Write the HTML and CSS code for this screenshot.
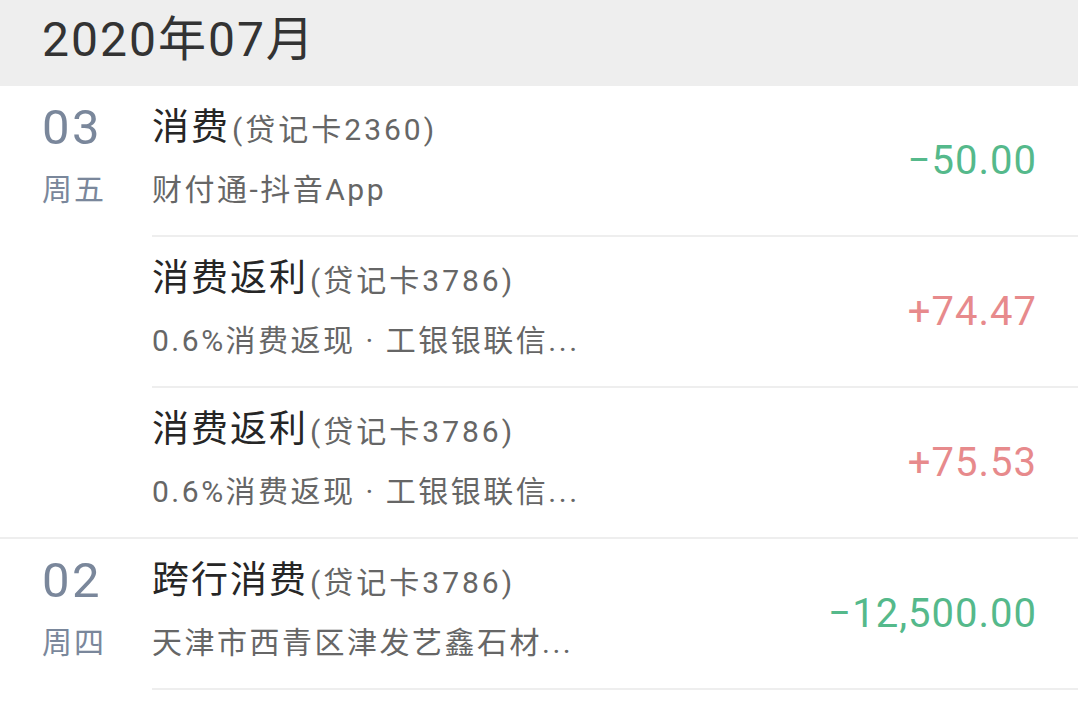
FILE: index.html
```html
<!DOCTYPE html>
<html lang="zh-CN">
<head>
  <meta charset="UTF-8" />
  <meta name="viewport" content="width=device-width, initial-scale=1.0"/>
  <title>账单明细</title>
  <link rel="stylesheet" href="styles.css">
</head>
<body>

  <div class="month">2020年07月</div>

  <div class="day">
    <div class="date">
      <div class="dayNum">03</div>
      <div class="week">周五</div>
    </div>
    <div class="items">
      <div class="item">
        <div class="info">
          <div class="title">消费<span class="card">(贷记卡2360)</span></div>
          <div class="desc">财付通-抖音App</div>
        </div>
        <div class="amount out">−50.00</div>
      </div>
      <div class="item">
        <div class="info">
          <div class="title">消费返利<span class="card">(贷记卡3786)</span></div>
          <div class="desc">0.6%消费返现 · 工银银联信...</div>
        </div>
        <div class="amount in">+74.47</div>
      </div>
      <div class="item">
        <div class="info">
          <div class="title">消费返利<span class="card">(贷记卡3786)</span></div>
          <div class="desc">0.6%消费返现 · 工银银联信...</div>
        </div>
        <div class="amount in">+75.53</div>
      </div>
    </div>
  </div>

  <div class="day">
    <div class="date">
      <div class="dayNum">02</div>
      <div class="week">周四</div>
    </div>
    <div class="items">
      <div class="item">
        <div class="info">
          <div class="title">跨行消费<span class="card">(贷记卡3786)</span></div>
          <div class="desc">天津市西青区津发艺鑫石材...</div>
        </div>
        <div class="amount out">−12,500.00</div>
      </div>
      <div class="item">
        <div class="info">
          <div class="title">跨行消费<span class="card">(贷记卡3786)</span></div>
          <div class="desc">天津市西青区津发艺鑫石材...</div>
        </div>
        <div class="amount out">−3,000.00</div>
      </div>
    </div>
  </div>

</body>
</html>
```

FILE: styles.css
```css
body {
  margin: 0;
  padding: 0;
  font-family: Roboto, 'Noto Sans CJK SC', sans-serif;
  background: #ffffff;
  color: #333333;
  overflow: hidden;
}

.month {
  height: 86px;
  line-height: 80px;
  padding-left: 42px;
  background-color: #eeeeee;
  font-size: 48px;
  letter-spacing: 2px;
  color: #333333;
}

.day {
  display: flex;
  border-bottom: 2px solid #eeeeee;
}

.day:last-child {
  border-bottom: none;
}

.date {
  width: 152px;
  padding: 18px 0 0 42px;
  box-sizing: border-box;
  flex-shrink: 0;
  color: #7a879b;
}

.dayNum {
  height: 48px;
  line-height: 48px;
  font-size: 49px;
  letter-spacing: 2.5px;
}

.week {
  margin-top: 18px;
  height: 40px;
  line-height: 40px;
  font-size: 30px;
  letter-spacing: 2px;
}

.items {
  flex: 1;
}

.item {
  display: flex;
  align-items: center;
  justify-content: space-between;
  padding: 18px 41px 25px 0;
  border-bottom: 2px solid #eeeeee;
}

.item:last-child {
  border-bottom: none;
}

.title {
  height: 48px;
  line-height: 48px;
  font-size: 37px;
  letter-spacing: 2px;
  color: #262626;
}

.card {
  font-size: 30px;
  letter-spacing: 3px;
  margin-left: 2px;
  color: #666666;
}

.desc {
  margin-top: 18px;
  height: 40px;
  line-height: 40px;
  font-size: 30px;
  letter-spacing: 2.5px;
  color: #666666;
}

.amount {
  font-size: 40px;
  letter-spacing: 1px;
  margin-top: 7px;
}

.out {
  color: #55b98b;
}

.in {
  color: #e78a8c;
}
```
